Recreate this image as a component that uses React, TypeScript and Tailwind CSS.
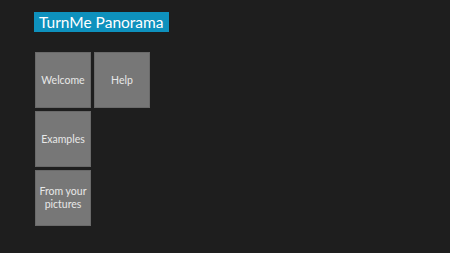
const tiles = [
  ["Welcome", "Help"],
  ["Examples"],
  ["From your pictures"],
];

function Tile({ label }: { label: string }) {
  return (
    <div className="w-[56px] h-[56px] bg-[#777777] border border-[#6a6a6a] flex items-center justify-center text-center">
      <span className="text-[10.5px] leading-[13px] text-[#e8e8e8]">{label}</span>
    </div>
  );
}

export default function App() {
  return (
    <div
      className="w-[450px] h-[253px] bg-[#1e1e1e] pt-[12px] pl-[34px]"
      style={{ fontFamily: 'Lato, "Open Sans", sans-serif' }}
    >
      <div className="w-fit bg-[#0e91bd] h-[20px] px-[5px] text-white text-[15.5px] leading-[20px]">
        TurnMe Panorama
      </div>
      <div className="mt-[20px] ml-[1px] flex flex-col gap-[3px]">
        {tiles.map((row, i) => (
          <div key={i} className="flex gap-[3px]">
            {row.map((t) => (
              <Tile key={t} label={t} />
            ))}
          </div>
        ))}
      </div>
    </div>
  );
}
